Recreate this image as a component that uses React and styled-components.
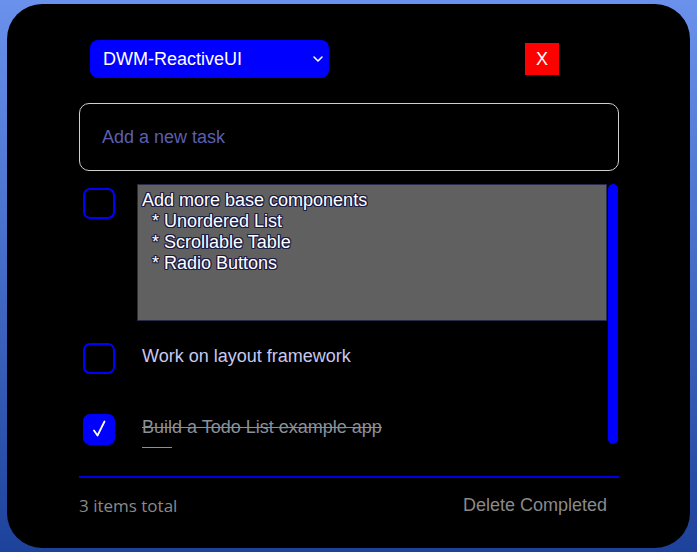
import React from 'react';
import styled, { createGlobalStyle } from 'styled-components';

const GlobalStyle = createGlobalStyle`
    html, body {
        margin:0;
        padding:0;
        height:100%;
    }
    body {
        background: linear-gradient(to bottom, #6a92ec, #1c429c);
        font-family: "Liberation Sans", Arial, sans-serif;
    }
    #root {
        padding:4px 7px;
        box-sizing:border-box;
        height:100%;
    }
`;

const Card = styled.div`
    background-color:#000;
    border-radius:35px;
    height:544px;
    box-sizing:border-box;
    padding:36px 71px 0 72px;
    display:flex;
    flex-direction:column;
`;

const Header = styled.div`
    display:flex;
    align-items:center;
    justify-content:space-between;
    height:38px;
    padding:0 60px 0 11px;
`;

const Dropdown = styled.div`
    width:239px;
    height:38px;
    box-sizing:border-box;
    background-color:#0000ff;
    border-radius:8px;
    color:#fff;
    font-size:18px;
    display:flex;
    align-items:center;
    justify-content:space-between;
    padding:0 4px 0 13px;
`;

const CloseButton = styled.button`
    width:34px;
    height:32px;
    border:none;
    background-color:#ff0000;
    color:#fff;
    font-family:"Liberation Sans", Arial, sans-serif;
    font-size:18px;
    padding:0;
    cursor:pointer;
`;

const TaskInput = styled.input`
    margin-top:25px;
    height:68px;
    box-sizing:border-box;
    border:1px solid #cfcfcf;
    border-radius:10px;
    background:#000;
    padding:0 22px;
    font-family:"Liberation Sans", Arial, sans-serif;
    font-size:18px;
    color:#fff;
    outline:none;
    &::placeholder {
        color:#5a5fb2;
    }
`;

const ListArea = styled.div`
    margin-top:13px;
    height:264px;
    display:flex;
`;

const List = styled.div`
    flex:1;
    overflow:hidden;
    display:flex;
    flex-direction:column;
    gap:18px;
`;

const ScrollTrack = styled.div`
    width:12px;
    flex-shrink:0;
    display:flex;
    justify-content:center;
`;

const ScrollThumb = styled.div`
    width:10px;
    height:260px;
    border-radius:5px;
    background-color:#0000ff;
`;

const Row = styled.div`
    display:flex;
    align-items:flex-start;
    gap:22px;
    flex-shrink:0;
    height:${props => props.height}px;
`;

const Check = styled.div`
    width:32px;
    height:31px;
    box-sizing:border-box;
    margin:4px 0 0 4px;
    border:2px solid #0000ff;
    border-radius:7px;
    background-color:${props => props.checked ? '#0000ff' : 'transparent'};
    flex-shrink:0;
    display:flex;
    align-items:center;
    justify-content:center;
`;

const EditBox = styled.textarea`
    flex:1;
    height:137px;
    box-sizing:border-box;
    margin:0;
    background-color:#606060;
    border:1px solid #2a2a4c;
    padding:5px 4px 4px 4px;
    resize:none;
    outline:none;
    overflow:hidden;
    font-family:"Liberation Sans", Arial, sans-serif;
    font-size:18px;
    line-height:21px;
    color:#fff;
    text-shadow: 1px 0 0 #1c1c42, -1px 0 0 #1c1c42, 0 1px 0 #1c1c42, 0 -1px 0 #1c1c42,
        1px 1px 0 #1c1c42, -1px -1px 0 #1c1c42, 1px -1px 0 #1c1c42, -1px 1px 0 #1c1c42;
`;

const Label = styled.div`
    padding:7px 5px 0 5px;
    font-size:18px;
    line-height:21px;
    color:${props => props.done ? '#8a909a' : '#c8c8f0'};
    text-decoration:${props => props.done ? 'line-through' : 'none'};
`;

const Dash = styled.div`
    width:30px;
    height:2px;
    margin:9px 0 0 5px;
    background-color:#8a909a;
`;

const Divider = styled.div`
    margin-top:28px;
    height:2px;
    background-color:#0000e6;
`;

const Footer = styled.div`
    display:flex;
    align-items:center;
    justify-content:space-between;
    padding:16px 12px 0 0;
`;

const Count = styled.span`
    font-family:"Open Sans", "Noto Sans", sans-serif;
    font-size:17px;
    color:#8a8a8a;
`;

const DeleteButton = styled.span`
    font-size:18px;
    color:#8a8a8a;
    cursor:pointer;
`;

const noteText = `Add more base components
  * Unordered List
  * Scrollable Table
  * Radio Buttons`;

const App = () => {
    return (
        <React.Fragment>
            <GlobalStyle />
            <Card>
                <Header>
                    <Dropdown>
                        <span>DWM-ReactiveUI</span>
                        <svg width="14" height="14" viewBox="0 0 14 14">
                            <polyline points="3,5 7,9 11,5" fill="none" stroke="#fff" strokeWidth="1.6" strokeLinecap="round" strokeLinejoin="round" />
                        </svg>
                    </Dropdown>
                    <CloseButton>X</CloseButton>
                </Header>
                <TaskInput placeholder="Add a new task" />
                <ListArea>
                    <List>
                        <Row height={137}>
                            <Check />
                            <EditBox defaultValue={noteText} readOnly />
                        </Row>
                        <Row height={53}>
                            <Check />
                            <Label>Work on layout framework</Label>
                        </Row>
                        <Row height={42}>
                            <Check checked>
                                <svg width="27" height="27" viewBox="0 0 27 27">
                                    <path d="M8 14.5 L11.5 19.5 L18.5 5.5" fill="none" stroke="#fff" strokeWidth="1.8" strokeLinecap="round" strokeLinejoin="round" />
                                </svg>
                            </Check>
                            <div>
                                <Label done>Build a Todo List example app</Label>
                                <Dash />
                            </div>
                        </Row>
                    </List>
                    <ScrollTrack>
                        <ScrollThumb />
                    </ScrollTrack>
                </ListArea>
                <Divider />
                <Footer>
                    <Count>3 items total</Count>
                    <DeleteButton>Delete Completed</DeleteButton>
                </Footer>
            </Card>
        </React.Fragment>
    );
};

export default App;
